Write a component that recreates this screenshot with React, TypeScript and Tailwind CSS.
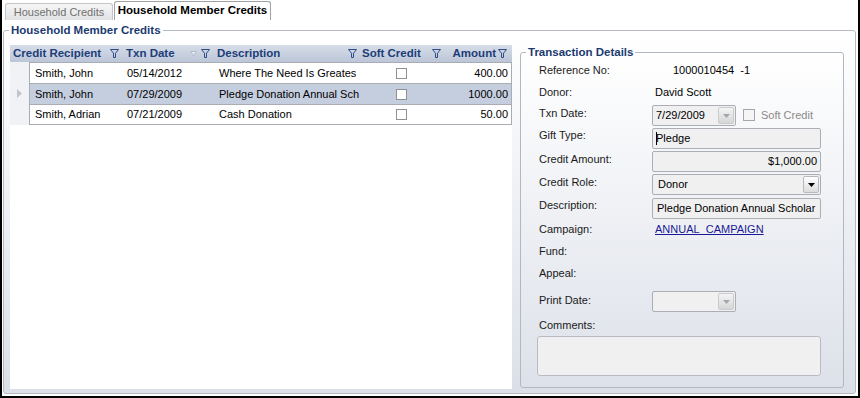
import React from 'react';

const FONT = { fontFamily: '"Liberation Sans", Arial, sans-serif' };

const rows = [
  { name: 'Smith, John', date: '05/14/2012', desc: 'Where The Need Is Greates', amount: '400.00', selected: false },
  { name: 'Smith, John', date: '07/29/2009', desc: 'Pledge Donation Annual Sch', amount: '1000.00', selected: true },
  { name: 'Smith, Adrian', date: '07/21/2009', desc: 'Cash Donation', amount: '50.00', selected: false },
];

function Funnel() {
  return (
    <svg width="9" height="9" viewBox="0 0 9 9" fill="none" className="shrink-0">
      <path d="M0.5 0.5H8.5L5.5 4.2V8.5H3.5V4.2Z" stroke="#2c4c88" strokeWidth="1" strokeLinejoin="round" />
    </svg>
  );
}

function SortHint() {
  return (
    <svg width="7" height="6" viewBox="0 0 7 6" className="shrink-0">
      <path d="M0 0H7L3.5 6Z" fill="#b3bccb" />
      <path d="M1.5 1H5.5L3.5 4.2Z" fill="#e6eaf0" />
    </svg>
  );
}

function DropButton({ dark }: { dark?: boolean }) {
  return (
    <div className={`flex h-[17px] w-[16px] items-center justify-center rounded-[2px] border ${dark ? 'border-[#b5b8bd] bg-linear-to-b from-white to-[#dcdcdc]' : 'border-[#c9cbce] bg-linear-to-b from-[#f4f4f4] to-[#d6d6d6]'}`}>
      <svg width="7" height="4" viewBox="0 0 7 4">
        <path d="M0 0H7L3.5 4Z" fill={dark ? '#000' : '#a3a6ab'} />
      </svg>
    </div>
  );
}

function Field({ children, className = '' }: { children?: React.ReactNode; className?: string }) {
  return (
    <div className={`flex h-[21px] items-center rounded-[2px] border border-[#abafb5] bg-[#f0f0f0] text-[11px] text-black ${className}`}>
      {children}
    </div>
  );
}

function Label({ children, className = '' }: { children: React.ReactNode; className?: string }) {
  return <div className={`w-[113px] shrink-0 leading-[13px] text-[11px] text-[#1a1a1a] ${className}`}>{children}</div>;
}

function MemberGrid() {
  return (
    <div className="h-[344px] w-[502px] shrink-0 bg-white">
      {/* header */}
      <div className="flex h-[17px] items-center bg-linear-to-b from-[#d7dde8] to-[#bcc6d8] text-[11.5px] font-bold text-[#1d3d78]">
        <div className="flex w-[112px] items-center justify-between pl-[3px] pr-[3px]">
          <span>Credit Recipient</span>
          <Funnel />
        </div>
        <div className="flex w-[92px] items-center justify-between pl-[4px] pr-[4px]">
          <span>Txn Date</span>
          <div className="flex items-center gap-[4px]">
            <SortHint />
            <Funnel />
          </div>
        </div>
        <div className="flex w-[145px] items-center justify-between pl-[3px] pr-[2px]">
          <span>Description</span>
          <Funnel />
        </div>
        <div className="flex w-[84px] items-center justify-between pl-[3px] pr-[2px]">
          <span>Soft Credit</span>
          <Funnel />
        </div>
        <div className="flex w-[69px] items-center justify-end gap-[2px] pr-[5px]">
          <span>Amount</span>
          <Funnel />
        </div>
      </div>

      {/* rows */}
      <div className="text-[11px] text-black">
        {rows.map((r, i) => (
          <div key={i} className="flex h-[21px]">
            <div className="flex w-[19px] shrink-0 items-center justify-center bg-[#f1f2f5]">
              {r.selected && (
                <svg width="5" height="9" viewBox="0 0 5 9">
                  <path d="M0 0L5 4.5L0 9Z" fill="#c2c6cc" />
                </svg>
              )}
            </div>
            <div
              className={`flex flex-1 items-center border-l border-r border-t border-[#a9adb3] ${i === rows.length - 1 ? 'border-b' : ''} ${r.selected ? 'bg-[#c5cedf]' : 'bg-white'}`}
            >
              <div className="w-[92px] pl-[5px]">{r.name}</div>
              <div className="w-[92px] pl-[5px]">{r.date}</div>
              <div className="w-[145px] pl-[5px] whitespace-nowrap">{r.desc}</div>
              <div className="flex w-[84px] justify-center">
                <div className="h-[11px] w-[11px] border border-[#8e9196] bg-white" />
              </div>
              <div className="flex-1 pr-[3px] text-right">{r.amount}</div>
            </div>
          </div>
        ))}
      </div>
    </div>
  );
}

function TransactionDetails() {
  return (
    <fieldset className="h-[343px] w-[324px] shrink-0 rounded-[3px] border border-[#b3b8c0] bg-linear-to-b from-white to-[#dde1e9]">
      <legend className="ml-[5px] px-[2px] text-[11.5px] font-bold leading-[14px] text-[#1b3a70]">Transaction Details</legend>
      <div className="flex flex-col pl-[18px] pt-[1px]">
        <div className="flex h-[21px] items-center">
          <Label>Reference No:</Label>
          <span className="ml-[21px] whitespace-pre text-[11px] text-black">1000010454  -1</span>
        </div>
        <div className="flex h-[22px] items-center">
          <Label>Donor:</Label>
          <span className="ml-[3px] text-[11px] text-black">David Scott</span>
        </div>
        <div className="flex h-[23px] items-start">
          <Label className="pt-[4px]">Txn Date:</Label>
          <Field className="mt-[2px] w-[84px] justify-between pl-[3px] pr-[1px]">
            <span>7/29/2009</span>
            <DropButton />
          </Field>
          <div className="ml-[7px] mt-[4px] flex items-center gap-[6px]">
            <div className="h-[12px] w-[12px] border border-[#a3a6ab] bg-[#f5f5f5]" />
            <span className="text-[11px] text-[#8a8a8a]">Soft Credit</span>
          </div>
        </div>
        <div className="flex h-[23px] items-start">
          <Label className="pt-[3px]">Gift Type:</Label>
          <Field className="mt-[2px] w-[169px] pl-[3px]">
            <span className="h-[13px] w-px bg-black" />
            <span className="-ml-[1px]">Pledge</span>
          </Field>
        </div>
        <div className="flex h-[23px] items-start">
          <Label className="pt-[4px]">Credit Amount:</Label>
          <Field className="mt-[2px] w-[169px] justify-end pr-[3px]">$1,000.00</Field>
        </div>
        <div className="flex h-[23px] items-start">
          <Label className="pt-[4px]">Credit Role:</Label>
          <Field className="mt-[2px] w-[169px] justify-between pl-[5px] pr-[1px]">
            <span>Donor</span>
            <DropButton dark />
          </Field>
        </div>
        <div className="flex h-[24px] items-start">
          <Label className="pt-[4px]">Description:</Label>
          <Field className="mt-[3px] w-[169px] pl-[4px] whitespace-nowrap overflow-hidden">Pledge Donation Annual Scholar</Field>
        </div>
        <div className="flex h-[21px] items-center">
          <Label>Campaign:</Label>
          <span className="ml-[3px] text-[11px] text-[#1a1a96] underline">ANNUAL_CAMPAIGN</span>
        </div>
        <div className="flex h-[23px] items-center">
          <Label>Fund:</Label>
        </div>
        <div className="flex h-[21px] items-center">
          <Label>Appeal:</Label>
        </div>
        <div className="flex h-[29px] items-start">
          <Label className="pt-[10px]">Print Date:</Label>
          <Field className="mt-[7px] w-[84px] justify-end pr-[1px]">
            <DropButton />
          </Field>
        </div>
        <div className="flex h-[20px] items-start">
          <Label className="pt-[6px]">Comments:</Label>
        </div>
        <div className="-ml-[2px] mt-[3px] h-[40px] w-[284px] rounded-[3px] border border-[#b8bcc2] bg-[#f0f0f0]" />
      </div>
    </fieldset>
  );
}

export default function App() {
  return (
    <div className="flex h-[398px] w-[860px] flex-col border-x-2 border-b-2 border-black bg-white" style={FONT}>
      {/* tabs */}
      <div className="flex h-[20px] shrink-0 items-end pl-[3px]">
        <div className="flex h-[17px] w-[108px] items-center justify-center rounded-t-[3px] border border-b-0 border-[#c3c5c9] bg-linear-to-b from-[#f6f6f6] to-[#e2e3e5] text-[11px] text-[#6f6f6f]">
          Household Credits
        </div>
        <div className="ml-[1px] flex h-[19px] w-[157px] items-center justify-center rounded-t-[3px] border border-b-0 border-[#9ea1a6] bg-white text-[11.5px] font-bold text-black">
          Household Member Credits
        </div>
      </div>

      {/* tab page */}
      <div className="flex-1 pl-[1px] pr-[2px] pt-[3px]">
        <fieldset className="rounded-[3px] border border-[#b6bac2] bg-linear-to-b from-white to-[#dbe0e8]">
          <legend className="ml-[5px] px-[2px] text-[11.5px] font-bold leading-[14px] text-[#1b3a70]">Household Member Credits</legend>
          <div className="flex items-start gap-[8px] pb-[4px] pl-[6px] pt-[8px]">
            <MemberGrid />
            <TransactionDetails />
          </div>
        </fieldset>
      </div>
    </div>
  );
}
